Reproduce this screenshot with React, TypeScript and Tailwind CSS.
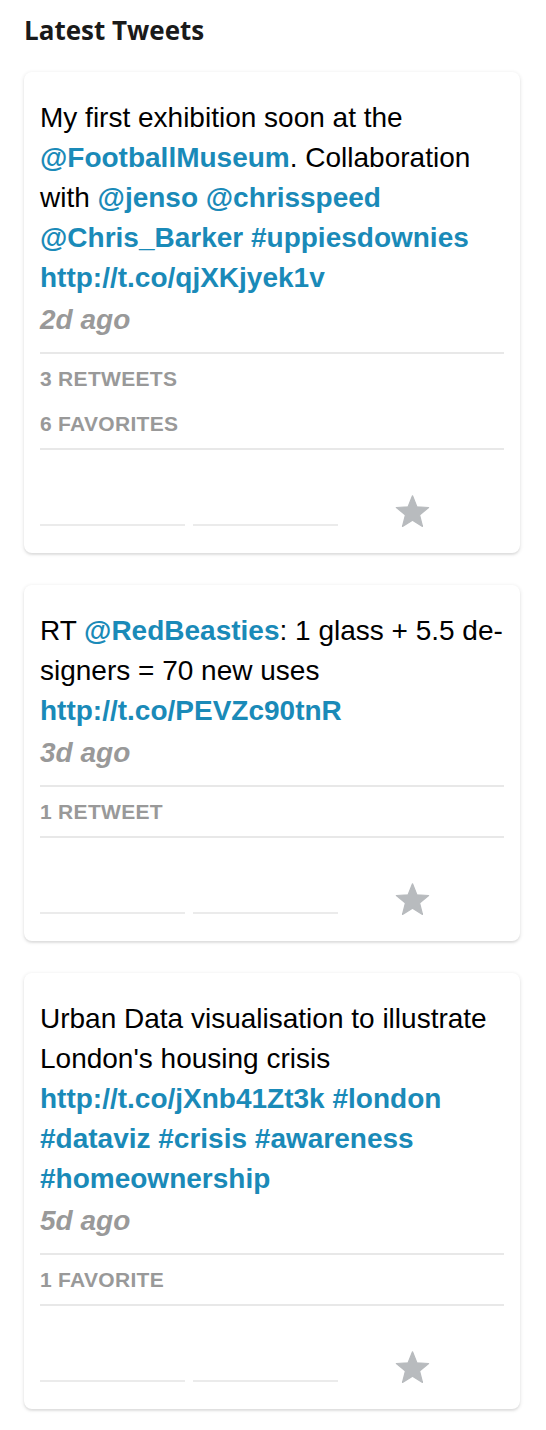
import React from 'react';

type Part = { text: string; link?: boolean };

interface Tweet {
  parts: Part[];
  ago: string;
  stats: string[];
}

const tweets: Tweet[] = [
  {
    parts: [
      { text: "My first exhibition soon at the " },
      { text: "@FootballMuseum", link: true },
      { text: ". Collaboration with " },
      { text: "@jenso", link: true },
      { text: " " },
      { text: "@chrisspeed", link: true },
      { text: " " },
      { text: "@Chris_Barker", link: true },
      { text: " " },
      { text: "#uppiesdownies", link: true },
      { text: " " },
      { text: "http://t.co/qjXKjyek1v", link: true },
    ],
    ago: "2d ago",
    stats: ["3 Retweets", "6 Favorites"],
  },
  {
    parts: [
      { text: "RT " },
      { text: "@RedBeasties", link: true },
      { text: ": 1 glass + 5.5 de\u00ADsigners = 70 new uses " },
      { text: "http://t.co/PEVZc90tnR", link: true },
    ],
    ago: "3d ago",
    stats: ["1 Retweet"],
  },
  {
    parts: [
      { text: "Urban Data visualisation to illustrate London's housing crisis " },
      { text: "http://t.co/jXnb41Zt3k", link: true },
      { text: " " },
      { text: "#london", link: true },
      { text: " " },
      { text: "#dataviz", link: true },
      { text: " " },
      { text: "#crisis", link: true },
      { text: " " },
      { text: "#awareness", link: true },
      { text: " " },
      { text: "#homeownership", link: true },
    ],
    ago: "5d ago",
    stats: ["1 Favorite"],
  },
];

const Star = () => (
  <svg viewBox="0 0 24 24" className="w-[37px] h-[37px] ml-[56px]">
    <polygon
      points="12,1.8 14.82,8.92 22.46,9.40 16.57,14.28 18.47,21.70 12,17.6 5.53,21.70 7.43,14.28 1.54,9.40 9.18,8.92"
      fill="#b8bbbe"
      stroke="#b8bbbe"
      strokeWidth="0.8"
      strokeLinejoin="round"
    />
  </svg>
);

const TweetCard = ({ tweet }: { tweet: Tweet }) => (
  <div className="w-[496px] rounded-lg bg-white px-4 pt-[26px] pb-[23px] shadow-[0_1px_4px_rgba(0,0,0,0.12),0_2px_2px_rgba(0,0,0,0.06)]">
    <p className="text-[28px] leading-[40px] text-black">
      {tweet.parts.map((p, i) =>
        p.link ? (
          <a key={i} className="font-bold text-[#1a8ab8]">
            {p.text}
          </a>
        ) : (
          <span key={i}>{p.text}</span>
        )
      )}
    </p>
    <div className="text-[28px] leading-[44px] font-bold italic text-[#999]">{tweet.ago}</div>

    {/* stats */}
    <div className="mt-[10px] border-y-2 border-[#e8e8e8] py-[2px]">
      {tweet.stats.map((s) => (
        <div key={s} className="text-[21px] leading-[45px] font-bold uppercase tracking-[0.3px] text-[#999]">
          {s}
        </div>
      ))}
    </div>

    {/* actions */}
    <div className="flex items-end pt-[43px]">
      <div className="w-[145px] h-[2px] mb-[4px] bg-[#ebebeb]" />
      <div className="w-[145px] h-[2px] mb-[4px] ml-[8px] bg-[#ebebeb]" />
      <Star />
    </div>
  </div>
);

export default function App() {
  return (
    <div className="min-h-screen bg-white px-6 pt-3 font-['Liberation_Sans',Arial,sans-serif]">
      <h2 className="mb-6 text-[26px] leading-[36px] font-bold text-[#1a1a1a] font-['Open_Sans',sans-serif]">
        Latest Tweets
      </h2>
      <div className="flex flex-col gap-8">
        {tweets.map((t, i) => (
          <TweetCard key={i} tweet={t} />
        ))}
      </div>
    </div>
  );
}
